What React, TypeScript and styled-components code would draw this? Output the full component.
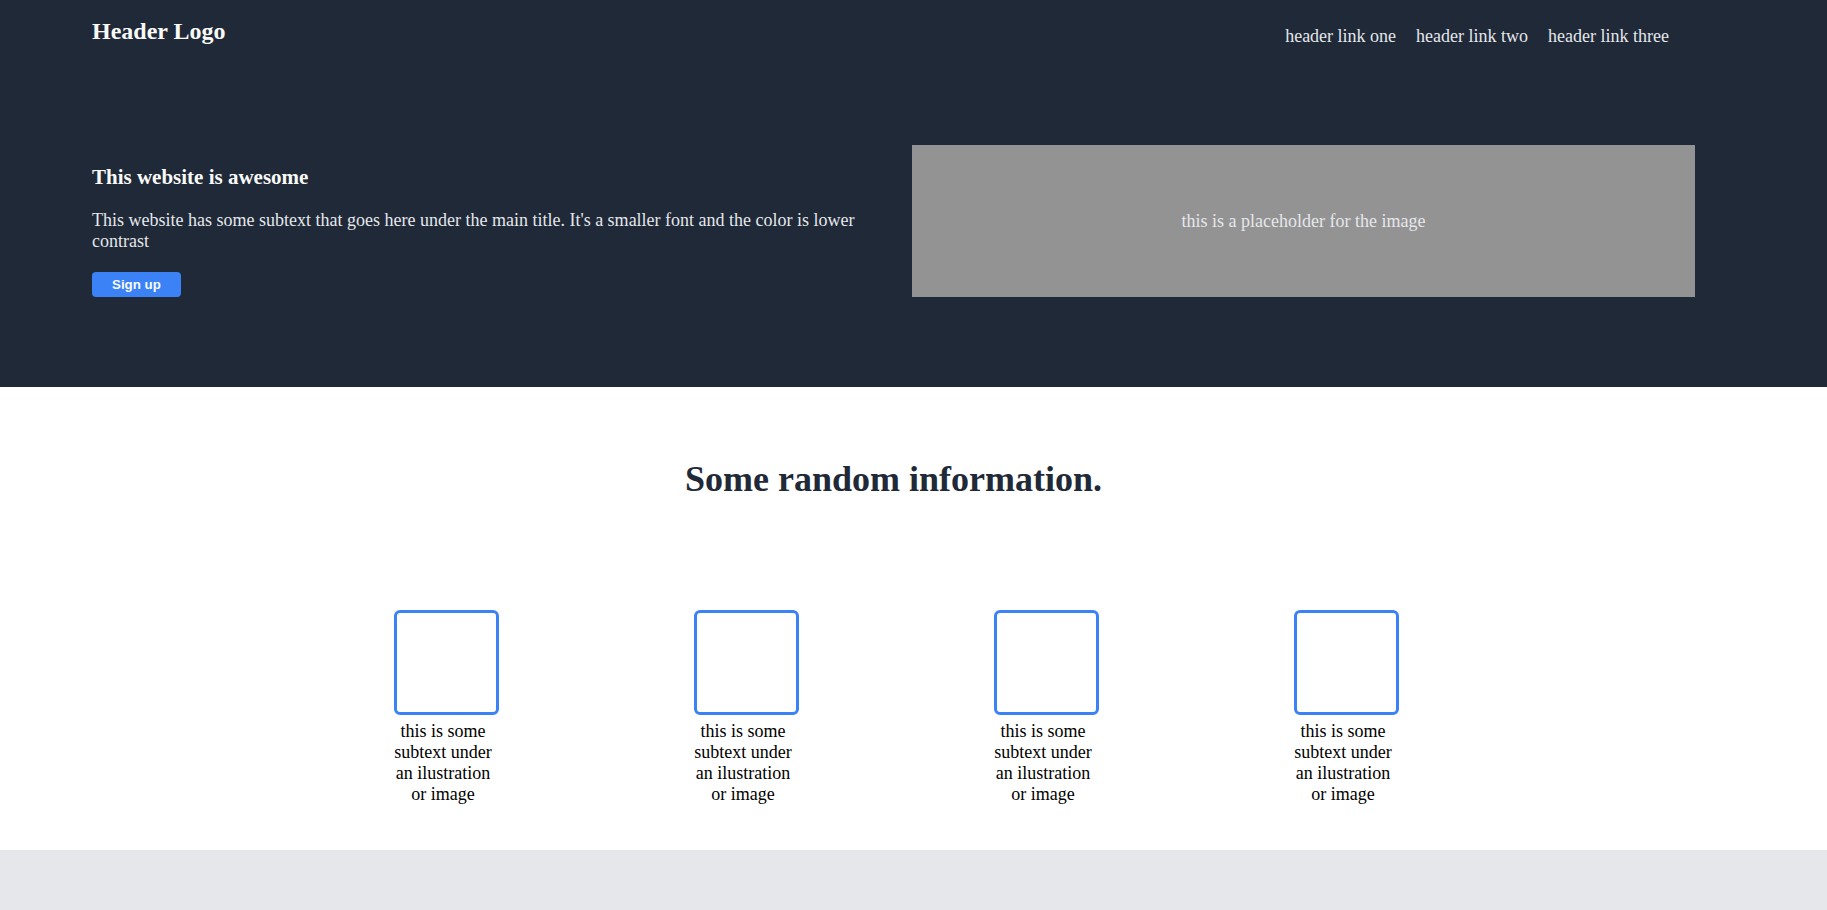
import * as React from 'react';
import styled, { createGlobalStyle } from 'styled-components';

const GlobalStyle = createGlobalStyle`
    html,
    body {
        margin: 0;
        padding: 0;
        background: #ffffff;
        font-family: 'Liberation Serif', 'Times New Roman', serif;
    }

    * {
        box-sizing: border-box;
    }
`;

const Hero = styled.section`
    background: #1f2937;
    height: 387px;
`;

const Container = styled.div`
    padding: 0 132px 0 92px;
`;

const Header = styled.header`
    display: flex;
    justify-content: space-between;
    align-items: flex-start;
    padding-top: 18px;
`;

const Logo = styled.div`
    color: #f9faf8;
    font-size: 24px;
    font-weight: bold;
`;

const Nav = styled.nav`
    display: flex;
    gap: 20px;
    margin-top: 8px;
    margin-right: 26px;
`;

const NavLink = styled.a`
    color: #e5e7eb;
    font-size: 18px;
    text-decoration: none;
`;

const HeroRow = styled.div`
    display: flex;
    align-items: flex-end;
    gap: 37px;
    margin-top: 98px;
`;

const HeroText = styled.div`
    flex: 1;
`;

const HeroTitle = styled.h1`
    margin: 0;
    color: #f9faf8;
    font-size: 21px;
    font-weight: bold;
`;

const HeroSub = styled.p`
    margin: 20px 0;
    color: #e5e7eb;
    font-size: 18px;
`;

const SignUp = styled.button`
    height: 25px;
    padding: 0 20px;
    border: none;
    border-radius: 4px;
    background: #3b82f6;
    color: #f9faf8;
    font-family: 'Liberation Sans', Arial, sans-serif;
    font-size: 13.33px;
    font-weight: bold;
    cursor: pointer;
`;

const Placeholder = styled.div`
    width: 783px;
    height: 152px;
    background: #939393;
    color: #e5e7eb;
    font-size: 18px;
    display: flex;
    align-items: center;
    justify-content: center;
`;

const Info = styled.section`
    background: #ffffff;
    padding: 71px 0 45px;
`;

const InfoTitle = styled.h2`
    margin: 0;
    text-align: center;
    color: #1f2937;
    font-size: 36px;
    font-weight: bold;
`;

const Cards = styled.div`
    display: flex;
    justify-content: center;
    gap: 195px;
    margin-top: 110px;
    padding-left: 5px;
`;

const Card = styled.div`
    width: 105px;
    display: flex;
    flex-direction: column;
    align-items: flex-start;
`;

const Illustration = styled.div`
    width: 105px;
    height: 105px;
    border: 3px solid #3b82f6;
    border-radius: 6px;
`;

const CardText = styled.p`
    width: 99px;
    margin: 6px 0 0;
    text-align: center;
    color: #000000;
    font-size: 18px;
`;

const Quote = styled.section`
    background: #e5e7eb;
    min-height: 300px;
`;

const links = ['header link one', 'header link two', 'header link three'];
const cards = [1, 2, 3, 4];

function App() {
    return (
        <>
            <GlobalStyle />
            <Hero>
                <Container>
                    <Header>
                        <Logo>Header Logo</Logo>
                        <Nav>
                            {links.map((link) => (
                                <NavLink key={link} href="#">
                                    {link}
                                </NavLink>
                            ))}
                        </Nav>
                    </Header>
                    <HeroRow>
                        <HeroText>
                            <HeroTitle>This website is awesome</HeroTitle>
                            <HeroSub>
                                This website has some subtext that goes here under the main title. It's a smaller font
                                and the color is lower contrast
                            </HeroSub>
                            <SignUp>Sign up</SignUp>
                        </HeroText>
                        <Placeholder>this is a placeholder for the image</Placeholder>
                    </HeroRow>
                </Container>
            </Hero>
            <Info>
                <Container>
                    <InfoTitle>Some random information.</InfoTitle>
                    <Cards>
                        {cards.map((n) => (
                            <Card key={n}>
                                <Illustration />
                                <CardText>this is some subtext under an ilustration or image</CardText>
                            </Card>
                        ))}
                    </Cards>
                </Container>
            </Info>
            <Quote />
        </>
    );
}

export default App;
